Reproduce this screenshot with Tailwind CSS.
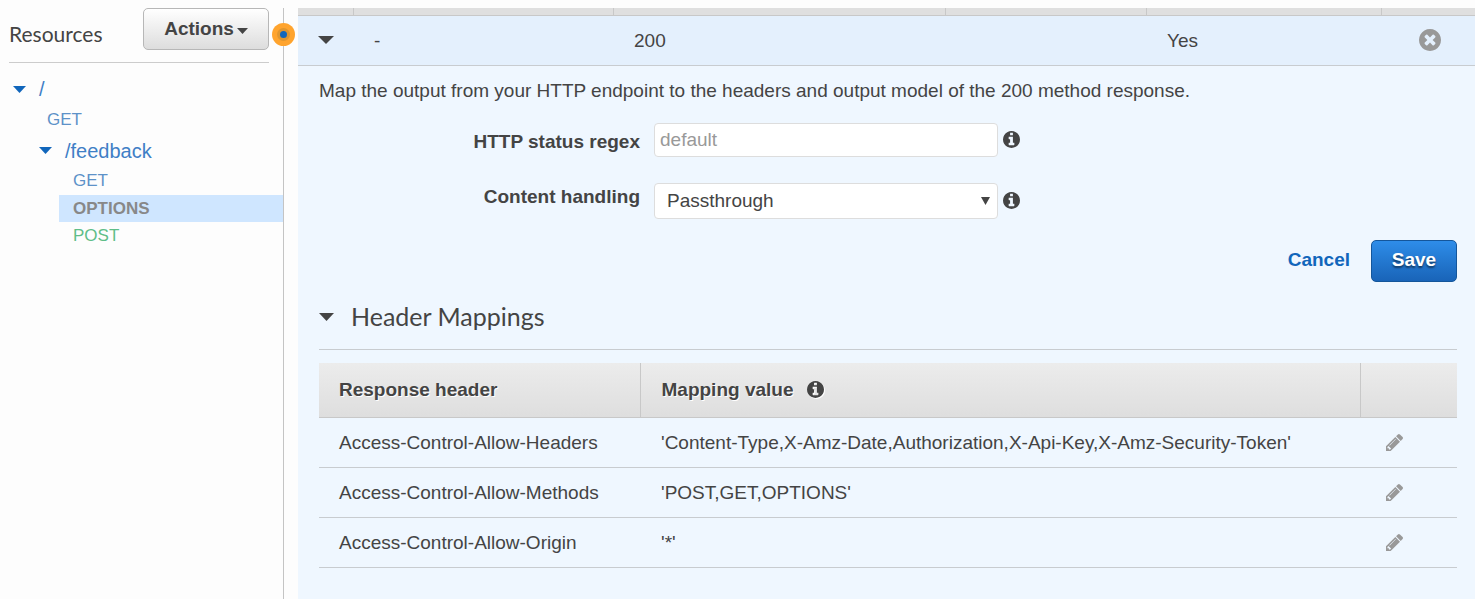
<!DOCTYPE html>
<html lang="en">
<head>
<meta charset="utf-8">
<meta name="viewport" content="width=device-width, initial-scale=1">
<title>Resources</title>
<script src="https://cdn.jsdelivr.net/npm/@tailwindcss/browser@4"></script>
</head>
<body class="bg-[#fdfdfd] text-[#444444] text-[19px] font-['Liberation_Sans',Arial,sans-serif]">
<svg class="hidden" aria-hidden="true">
  <symbol id="info" viewBox="0 128 1536 1536"><path d="M1024 1376v-160q0-14-9-23t-23-9h-96v-512q0-14-9-23t-23-9h-320q-14 0-23 9t-9 23v160q0 14 9 23t23 9h96v320h-96q-14 0-23 9t-9 23v160q0 14 9 23t23 9h448q14 0 23-9t9-23zm-128-896v-160q0-14-9-23t-23-9h-192q-14 0-23 9t-9 23v160q0 14 9 23t23 9h192q14 0 23-9t9-23zm640 416q0 209-103 385.5t-279.5 279.5-385.5 103-385.5-103-279.5-279.5-103-385.5 103-385.5 279.5-279.5 385.5-103 385.5 103 279.5 279.5 103 385.5z"/></symbol>
  <symbol id="remove" viewBox="128 128 1536 1536"><path d="M1277 1122q0-26-19-45l-181-181 181-181q19-19 19-45 0-27-19-46l-90-90q-19-19-46-19-26 0-45 19l-181 181-181-181q-19-19-45-19-27 0-46 19l-90 90q-19 19-19 46 0 26 19 45l181 181-181 181q-19 19-19 45 0 27 19 46l90 90q19 19 46 19 26 0 45-19l181-181 181 181q19 19 45 19 27 0 46-19l90-90q19-19 19-46zm387-226q0 209-103 385.5t-279.5 279.5-385.5 103-385.5-103-279.5-279.5-103-385.5 103-385.5 279.5-279.5 385.5-103 385.5 103 279.5 279.5 103 385.5z"/></symbol>
  <symbol id="pencil" viewBox="128 149 1515 1515"><path d="M491 1536l91-91-235-235-91 91v107h128v128h107zm523-928q0-22-22-22-10 0-17 7l-542 542q-7 7-7 17 0 22 22 22 10 0 17-7l542-542q7-7 7-17zm-54-192l416 416-832 832h-416v-416zm683 96q0 53-37 90l-166 166-416-416 166-165q36-38 90-38 53 0 91 38l235 234q37 39 37 91z"/></symbol>
  <symbol id="caret" viewBox="0 0 16 8" preserveAspectRatio="none"><path d="M0 0h16L8 8z"/></symbol>
</svg>

<div class="flex min-h-screen pt-2">
  <aside class="relative w-[284px] shrink-0 border-r border-[#c4c4c4]">
    <div class="ml-[9px] mr-[14px] flex items-start justify-between border-b border-[#cccccc] pb-3">
      <h1 class="h-[42px] pt-[5px] font-[Lato,sans-serif] text-[21px] leading-[42px]">Resources</h1>
      <button type="button" class="flex h-[42px] w-[126px] items-center justify-center gap-[3px] rounded-[5px] border border-[#b7b7b7] bg-linear-to-b from-white to-[#dddddd] text-[19px] font-bold">Actions<svg class="mt-[3px] h-[6px] w-[11px]" fill="currentColor"><use href="#caret"/></svg></button>
    </div>
    <span class="absolute left-[272px] top-[15px] z-10 flex size-[23px] items-center justify-center rounded-full bg-[#ffa42e]"><span class="flex size-[13px] items-center justify-center rounded-full bg-[#e0962f]"><span class="size-[7px] rounded-full bg-[#1166bb]"></span></span></span>
    <nav aria-label="Resources" class="pt-[11px] text-[17px] text-[#5e92c8]">
      <div class="flex h-[30px] items-center gap-[13px] pl-[13px] text-[20px] text-[#3f7fc6]">
        <button type="button" aria-label="Collapse /"><svg class="h-[7px] w-[13px] text-[#1166bb]" fill="currentColor"><use href="#caret"/></svg></button>
        <a href="#">/</a>
      </div>
      <a href="#" class="flex h-[31px] items-center pl-[47px]">GET</a>
      <div class="flex h-[31px] items-center gap-[13px] pl-[39px] text-[20px] text-[#3f7fc6]">
        <button type="button" aria-label="Collapse /feedback"><svg class="h-[7px] w-[13px] text-[#1166bb]" fill="currentColor"><use href="#caret"/></svg></button>
        <a href="#">/feedback</a>
      </div>
      <a href="#" class="flex h-[29px] items-center pl-[73px]">GET</a>
      <a href="#" class="ml-[59px] flex h-[27px] items-center bg-[#cfe6ff] pl-[14px] font-bold text-[#888888]">OPTIONS</a>
      <a href="#" class="flex h-[27px] items-center pl-[73px] text-[#5fbe88]">POST</a>
    </nav>
  </aside>

  <main class="ml-[14px] min-w-0 grow bg-[#eff7ff]">
    <table class="w-full table-fixed">
      <colgroup><col class="w-[55px]"><col class="w-[260px]"><col class="w-[332px]"><col class="w-[201px]"><col class="w-[235px]"><col></colgroup>
      <thead>
        <tr class="h-[7px] border-b border-[#c8c8c8] bg-[#dfdfdf]">
          <td class="border-r border-[#c8c8c8]"></td><td class="border-r border-[#c8c8c8]"></td><td class="border-r border-[#c8c8c8]"></td><td class="border-r border-[#c8c8c8]"></td><td class="border-r border-[#c8c8c8]"></td><td></td>
        </tr>
      </thead>
      <tbody>
        <tr class="h-[50px] border-b border-[#c8ccd0] bg-[#e4f0fd]">
          <td class="pl-5"><button type="button" aria-label="Collapse response 200" class="block"><svg class="h-2 w-4" fill="currentColor"><use href="#caret"/></svg></button></td>
          <td class="pl-[21px] pt-0.5">-</td>
          <td class="pl-[21px] pt-0.5">200</td>
          <td></td>
          <td class="pl-[21px] pt-0.5">Yes</td>
          <td class="pl-[3px]"><button type="button" aria-label="Remove response" class="mx-auto block text-[#999999]"><svg class="size-[22px]" fill="currentColor"><use href="#remove"/></svg></button></td>
        </tr>
      </tbody>
    </table>

    <section class="pl-[21px] pr-[18px] pt-3">
      <p class="leading-[26px]">Map the output from your HTTP endpoint to the headers and output model of the 200 method response.</p>
      <form>
        <div class="mt-[19px] flex items-start">
          <label for="regex" class="w-[321px] text-right font-bold leading-[38px]">HTTP status regex</label>
          <input id="regex" type="text" placeholder="default" class="ml-[14px] h-[34px] w-[344px] rounded-[4px] border border-[#dddddd] bg-white px-[5px] placeholder:text-[#999999]">
          <svg class="ml-[5px] mt-2 size-[17px]" fill="currentColor"><use href="#info"/></svg>
        </div>
        <div class="mt-[22px] flex items-start">
          <label for="handling" class="w-[321px] text-right font-bold leading-7">Content handling</label>
          <div class="relative ml-[14px] w-[344px]">
            <select id="handling" class="block h-9 w-full appearance-none rounded-[4px] border border-[#dddddd] bg-white pl-3 pr-6 pt-0.5"><option>Passthrough</option></select>
            <svg class="pointer-events-none absolute right-2 top-[14px] h-2 w-[9px]" fill="currentColor"><use href="#caret"/></svg>
          </div>
          <svg class="ml-[5px] mt-[9px] size-[17px]" fill="currentColor"><use href="#info"/></svg>
        </div>
        <div class="mt-[21px] flex items-center justify-end gap-[21px] font-bold">
          <button type="button" class="text-[#1166bb]">Cancel</button>
          <button type="submit" class="h-[42px] w-[86px] rounded-[5px] border border-[#14569b] bg-linear-to-b from-[#2e8de9] to-[#1964b8] text-white text-shadow-[0_2px_2px_#00000080]">Save</button>
        </div>
      </form>

      <h2 class="flex h-17 items-center gap-[17px] border-b border-[#c8ccd0] pt-1 font-[Lato,sans-serif] text-[25px]">
        <button type="button" aria-label="Collapse Header Mappings"><svg class="h-2 w-[15px]" fill="currentColor"><use href="#caret"/></svg></button>
        Header Mappings
      </h2>

      <table class="mt-[13px] w-full table-fixed text-left">
        <colgroup><col class="w-[321px]"><col><col class="w-[97px]"></colgroup>
        <thead>
          <tr class="h-[55px] border-b border-[#c8c8c8] bg-linear-to-b from-[#ececec] to-[#dedede] text-shadow-[1px_1px_0_#ffffff]">
            <th class="border-r border-[#c8c8c8] pl-5">Response header</th>
            <th class="border-r border-[#c8c8c8] pl-[21px]"><span class="flex items-center gap-[14px]">Mapping value <svg class="size-[17px] drop-shadow-[1px_1px_0_#ffffff]" fill="currentColor"><use href="#info"/></svg></span></th>
            <th></th>
          </tr>
        </thead>
        <tbody>
          <tr class="h-[50px] border-b border-[#c8ccd0]">
            <td class="pl-5 pt-0.5">Access-Control-Allow-Headers</td>
            <td class="pl-[21px] pt-0.5">'Content-Type,X-Amz-Date,Authorization,X-Api-Key,X-Amz-Security-Token'</td>
            <td class="pl-[26px]"><button type="button" aria-label="Edit Access-Control-Allow-Headers" class="block text-[#999999]"><svg class="size-[17px]" fill="currentColor"><use href="#pencil"/></svg></button></td>
          </tr>
          <tr class="h-[50px] border-b border-[#c8ccd0]">
            <td class="pl-5 pt-0.5">Access-Control-Allow-Methods</td>
            <td class="pl-[21px] pt-0.5">'POST,GET,OPTIONS'</td>
            <td class="pl-[26px]"><button type="button" aria-label="Edit Access-Control-Allow-Methods" class="block text-[#999999]"><svg class="size-[17px]" fill="currentColor"><use href="#pencil"/></svg></button></td>
          </tr>
          <tr class="h-[50px] border-b border-[#c8ccd0]">
            <td class="pl-5 pt-0.5">Access-Control-Allow-Origin</td>
            <td class="pl-[21px] pt-0.5">'*'</td>
            <td class="pl-[26px]"><button type="button" aria-label="Edit Access-Control-Allow-Origin" class="block text-[#999999]"><svg class="size-[17px]" fill="currentColor"><use href="#pencil"/></svg></button></td>
          </tr>
        </tbody>
      </table>
    </section>
  </main>
</div>
</body>
</html>
